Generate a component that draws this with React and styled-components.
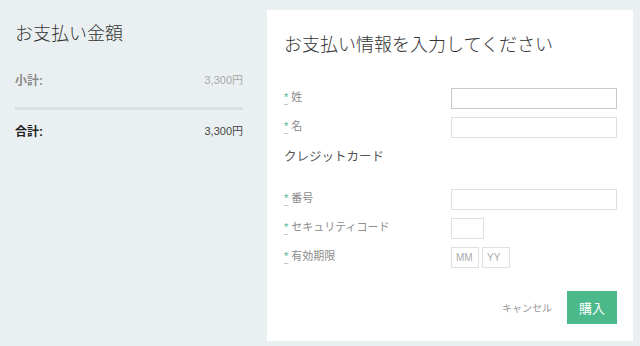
import styled, { createGlobalStyle } from 'styled-components';

const GREEN = '#4cb98a';

const GlobalStyle = createGlobalStyle`
  html, body {
    margin: 0;
    padding: 0;
    background: #eaf0f1;
  }
  body {
    font-family: "Liberation Sans", "Noto Sans CJK JP", sans-serif;
    color: #333;
  }
`;

function App() {
  return (
    <>
      <GlobalStyle />
      <Page>
        <Summary>
          <SummaryTitle>お支払い金額</SummaryTitle>
          <SummaryRow>
            <SumLabel>小計:</SumLabel>
            <SumValue>3,300円</SumValue>
          </SummaryRow>
          <Divider />
          <SummaryRow>
            <SumLabel $total>合計:</SumLabel>
            <SumValue $total>3,300円</SumValue>
          </SummaryRow>
        </Summary>

        <Card>
          <CardTitle>お支払い情報を入力してください</CardTitle>
          <Form>
            <Field>
              <Label><Req>*</Req>姓</Label>
              <Input $focused />
            </Field>
            <Field>
              <Label><Req>*</Req>名</Label>
              <Input />
            </Field>
            <Section>クレジットカード</Section>
            <Field>
              <Label><Req>*</Req>番号</Label>
              <Input />
            </Field>
            <Field>
              <Label><Req>*</Req>セキュリティコード</Label>
              <Input $width={33} />
            </Field>
            <Field>
              <Label><Req>*</Req>有効期限</Label>
              <Inline>
                <Input $width={28} placeholder="MM" />
                <Input $width={28} placeholder="YY" />
              </Inline>
            </Field>
          </Form>
          <Actions>
            <CancelLink>キャンセル</CancelLink>
            <BuyButton>購入</BuyButton>
          </Actions>
        </Card>
      </Page>
    </>
  );
}

const Page = styled.div`
  display: flex;
  align-items: flex-start;
  padding: 10px 7px 0 15px;
  height: 346px;
  box-sizing: border-box;
`;

const Summary = styled.section`
  width: 228px;
  padding-top: 13px;
`;

const SummaryTitle = styled.h2`
  margin: 0 0 26px;
  font-size: 18px;
  line-height: 22px;
  font-weight: 300;
  color: #333;
`;

const SummaryRow = styled.div`
  display: flex;
  justify-content: space-between;
  align-items: center;
  height: 16px;
  font-size: 12px;
`;

const SumLabel = styled.span`
  font-weight: 700;
  color: ${(p) => (p.$total ? '#222' : '#8a8a8a')};
`;

const SumValue = styled.span`
  font-size: 11px;
  color: ${(p) => (p.$total ? '#444' : '#a8a8a8')};
`;

const Divider = styled.hr`
  margin: 20px 0 12px;
  border: 0;
  height: 3px;
  background: #dadfe0;
`;

const Card = styled.section`
  margin-left: 24px;
  width: 366px;
  height: 331px;
  box-sizing: border-box;
  background: #fff;
  padding: 24px 16px 17px 17px;
  display: flex;
  flex-direction: column;
`;

const CardTitle = styled.h1`
  margin: 0 0 32px;
  font-size: 18px;
  line-height: 22px;
  font-weight: 300;
  color: #333;
`;

const Form = styled.div`
  display: flex;
  flex-direction: column;
  gap: 8px;
`;

const Field = styled.div`
  display: grid;
  grid-template-columns: 167px 1fr;
  align-items: center;
  height: 21px;
`;

const Label = styled.label`
  display: block;
  font-size: 11px;
  line-height: 14px;
  padding-bottom: 3px;
  color: #8c8c8c;
`;

const Req = styled.abbr`
  color: ${GREEN};
  font-size: 11px;
  margin-right: 3px;
  text-decoration: underline;
  text-decoration-color: #c6c6c6;
  text-underline-offset: 3px;
`;

const Section = styled.div`
  margin: 1px 0 13px;
  height: 21px;
  line-height: 21px;
  font-size: 12.5px;
  color: #555;
`;

const Input = styled.input`
  box-sizing: border-box;
  width: ${(p) => (p.$width ? `${p.$width}px` : '100%')};
  height: 21px;
  padding: 0 4px;
  border: 1px solid ${(p) => (p.$focused ? '#c9c9c9' : '#e0e0e0')};
  background: #fff;
  font-family: "Liberation Sans", sans-serif;
  font-size: 10px;
  outline: none;

  &::placeholder {
    color: #aaa;
  }
`;

const Inline = styled.div`
  display: flex;
  gap: 3px;
`;

const Actions = styled.div`
  margin-top: auto;
  display: flex;
  justify-content: flex-end;
  align-items: center;
  gap: 15px;
`;

const CancelLink = styled.span`
  font-size: 10px;
  color: #999;
`;

const BuyButton = styled.button`
  width: 50px;
  height: 33px;
  border: 0;
  background: ${GREEN};
  color: #fff;
  font-family: "Liberation Sans", "Noto Sans CJK JP", sans-serif;
  font-size: 13px;
  cursor: pointer;
`;

export default App;
